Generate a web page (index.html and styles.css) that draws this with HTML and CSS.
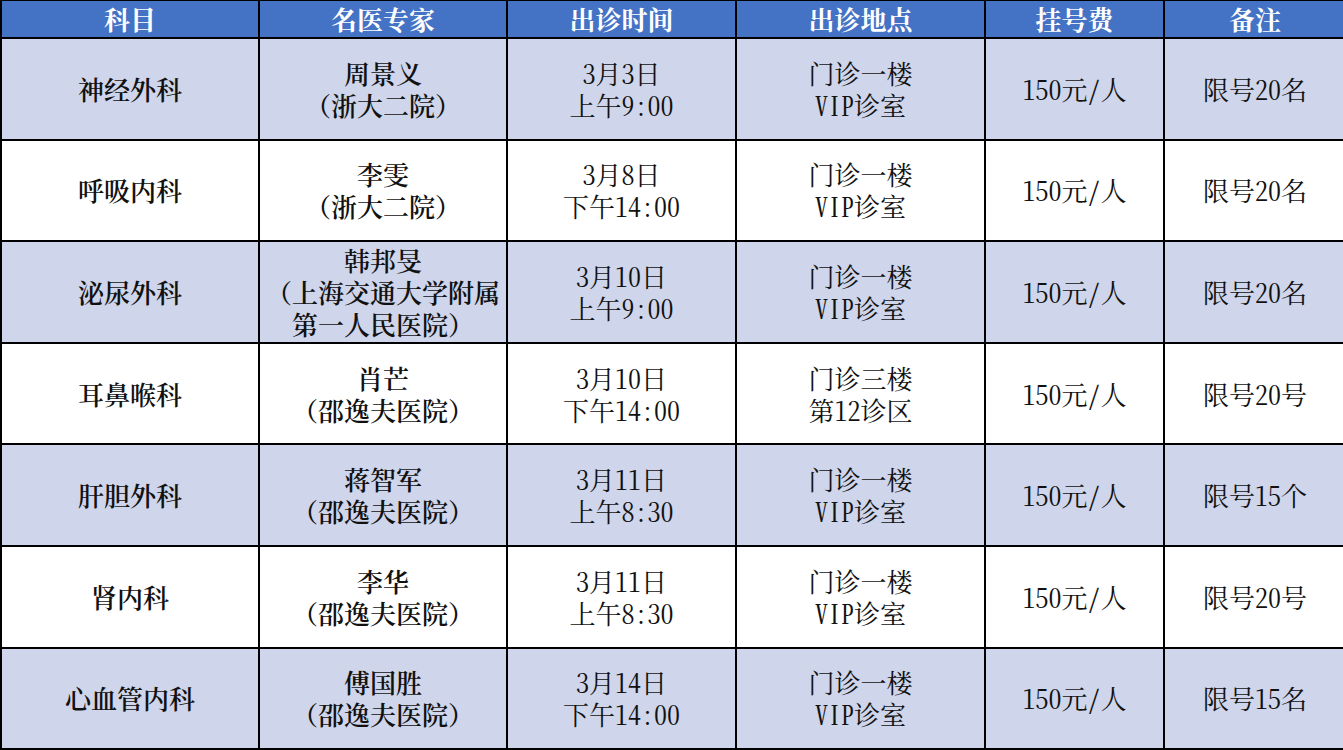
FILE: index.html
```html
<!DOCTYPE html>
<html lang="zh-CN">
<head>
<meta charset="utf-8">
<title>名医专家出诊表</title>
<link rel="stylesheet" href="styles.css">
</head>
<body>
<div class="table">
  <div class="cell head">科目</div>
  <div class="cell head">名医专家</div>
  <div class="cell head">出诊时间</div>
  <div class="cell head">出诊地点</div>
  <div class="cell head">挂号费</div>
  <div class="cell head">备注</div>

  <div class="cell odd strong">神经外科</div>
  <div class="cell odd strong">周景义<br>（浙大二院）</div>
  <div class="cell odd">3月3日<br>上午9:00</div>
  <div class="cell odd">门诊一楼<br>VIP诊室</div>
  <div class="cell odd">150元/人</div>
  <div class="cell odd">限号20名</div>

  <div class="cell strong">呼吸内科</div>
  <div class="cell strong">李雯<br>（浙大二院）</div>
  <div class="cell">3月8日<br>下午14:00</div>
  <div class="cell">门诊一楼<br>VIP诊室</div>
  <div class="cell">150元/人</div>
  <div class="cell">限号20名</div>

  <div class="cell odd strong">泌尿外科</div>
  <div class="cell odd strong">韩邦旻<br>（上海交通大学附属<br>第一人民医院）</div>
  <div class="cell odd">3月10日<br>上午9:00</div>
  <div class="cell odd">门诊一楼<br>VIP诊室</div>
  <div class="cell odd">150元/人</div>
  <div class="cell odd">限号20名</div>

  <div class="cell strong">耳鼻喉科</div>
  <div class="cell strong">肖芒<br>（邵逸夫医院）</div>
  <div class="cell">3月10日<br>下午14:00</div>
  <div class="cell">门诊三楼<br>第12诊区</div>
  <div class="cell">150元/人</div>
  <div class="cell">限号20号</div>

  <div class="cell odd strong">肝胆外科</div>
  <div class="cell odd strong">蒋智军<br>（邵逸夫医院）</div>
  <div class="cell odd">3月11日<br>上午8:30</div>
  <div class="cell odd">门诊一楼<br>VIP诊室</div>
  <div class="cell odd">150元/人</div>
  <div class="cell odd">限号15个</div>

  <div class="cell strong">肾内科</div>
  <div class="cell strong">李华<br>（邵逸夫医院）</div>
  <div class="cell">3月11日<br>上午8:30</div>
  <div class="cell">门诊一楼<br>VIP诊室</div>
  <div class="cell">150元/人</div>
  <div class="cell">限号20号</div>

  <div class="cell odd strong">心血管内科</div>
  <div class="cell odd strong">傅国胜<br>（邵逸夫医院）</div>
  <div class="cell odd">3月14日<br>下午14:00</div>
  <div class="cell odd">门诊一楼<br>VIP诊室</div>
  <div class="cell odd">150元/人</div>
  <div class="cell odd">限号15名</div>
</div>
</body>
</html>
```

FILE: styles.css
```css
html, body {
  margin: 0;
  padding: 0;
  background: #ffffff;
  overflow: hidden;
}

.table {
  display: grid;
  grid-template-columns: 256px 246px 227px 247px 177px 180px;
  grid-template-rows: 36px repeat(7, 99.6px);
  gap: 2px;
  padding: 0 0 2px 2px;
  border-top: 1px solid #000;
  background: #000000;
  width: 1345px;
  font-family: "Noto Serif CJK SC", "Liberation Serif", "Noto Sans CJK SC", serif;
  font-size: 26px;
  line-height: 32px;
  color: #111111;
}

.cell {
  background: #ffffff;
  display: flex;
  align-items: center;
  justify-content: center;
  text-align: center;
  white-space: nowrap;
  font-feature-settings: "hwid" 1;
}

.cell.odd {
  background: #cfd5ea;
}

.cell.head {
  background: #4472c4;
  color: #ffffff;
  font-weight: bold;
  line-height: 30px;
  font-feature-settings: normal;
}

.cell.strong {
  font-weight: 600;
  font-feature-settings: normal;
}
```
